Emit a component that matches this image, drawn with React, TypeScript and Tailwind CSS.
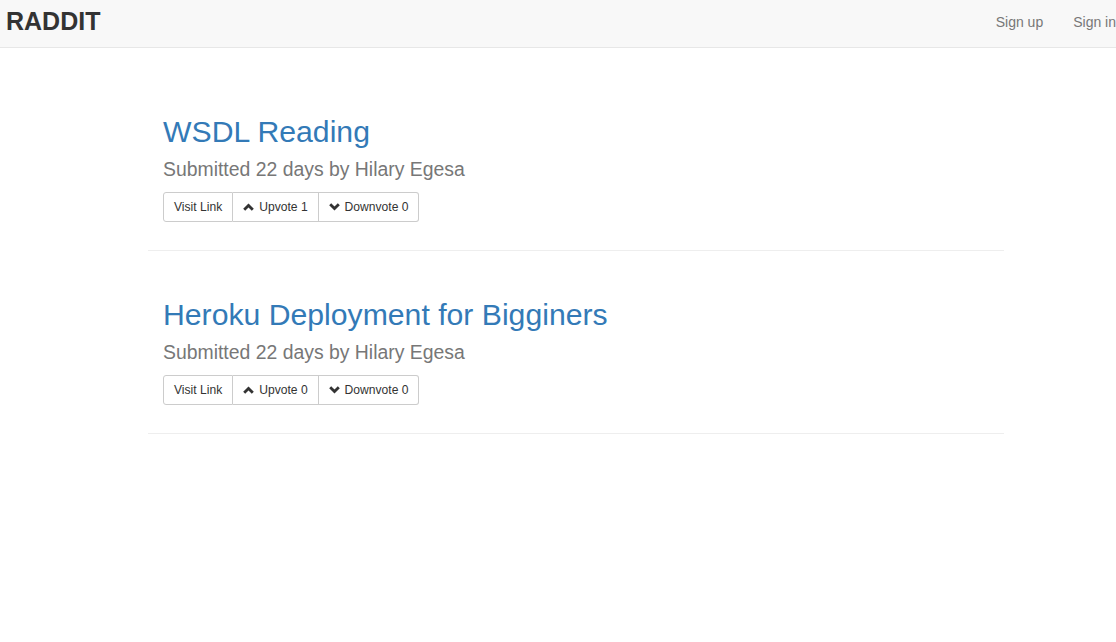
import React from "react";

const ChevronUp = () => (
  <svg width="11" height="8" viewBox="0 0 11 8" className="mr-[5px] shrink-0">
    <path d="M1.2 6.8 L5.5 2.4 L9.8 6.8" fill="none" stroke="#333" strokeWidth="2.8" strokeLinejoin="miter" />
  </svg>
);

const ChevronDown = () => (
  <svg width="11" height="8" viewBox="0 0 11 8" className="mr-[5px] shrink-0">
    <path d="M1.2 1.2 L5.5 5.6 L9.8 1.2" fill="none" stroke="#333" strokeWidth="2.8" strokeLinejoin="miter" />
  </svg>
);

type Post = { title: string; up: number; down: number };

const posts: Post[] = [
  { title: "WSDL Reading", up: 1, down: 0 },
  { title: "Heroku Deployment for Bigginers", up: 0, down: 0 },
];

function PostItem({ post, first }: { post: Post; first: boolean }) {
  return (
    <div className={first ? "" : "mt-[47px]"}>
      <div className="px-[15px]">
        <h2 className="text-[30.2px] leading-[33px] text-[#337ab7] font-normal">{post.title}</h2>
        <div className="mt-[10px] text-[19.4px] leading-[22px] text-[#777]">Submitted 22 days by Hilary Egesa</div>
        <div className="mt-[12px] flex text-[12.1px] leading-[18px] text-[#333]">
          <span className="flex items-center h-[30px] px-[10px] border border-[#ccc] rounded-l-[3px] bg-white">Visit Link</span>
          <span className="flex items-center h-[30px] px-[10px] border border-l-0 border-[#ccc] bg-white">
            <ChevronUp />
            Upvote {post.up}
          </span>
          <span className="flex items-center h-[30px] px-[10px] border border-l-0 border-[#ccc] rounded-r-[3px] bg-white">
            <ChevronDown />
            Downvote {post.down}
          </span>
        </div>
      </div>
      <div className="mt-[28px] h-px bg-[#eee]" />
    </div>
  );
}

export default function App() {
  return (
    <div
      className="w-[1116px] h-[642px] overflow-hidden bg-white"
      style={{ fontFamily: '"Liberation Sans", Arial, Helvetica, sans-serif' }}
    >
      <nav className="h-[48px] bg-[#f8f8f8] border-b border-[#e7e7e7] flex items-start">
        <div className="pl-[6px] pt-[9px] text-[25px] leading-[25px] font-bold text-[#333]">RADDIT</div>
        <div className="ml-auto flex text-[14px] leading-[20px] text-[#777] pt-[12px]">
          <span className="px-[15px]">Sign up</span>
          <span className="pl-[15px] pr-0 whitespace-nowrap">Sign in</span>
        </div>
      </nav>
      <main className="pt-[67px] pl-[148px] w-[1004px]">
        {posts.map((p, i) => (
          <PostItem key={i} post={p} first={i === 0} />
        ))}
      </main>
    </div>
  );
}
